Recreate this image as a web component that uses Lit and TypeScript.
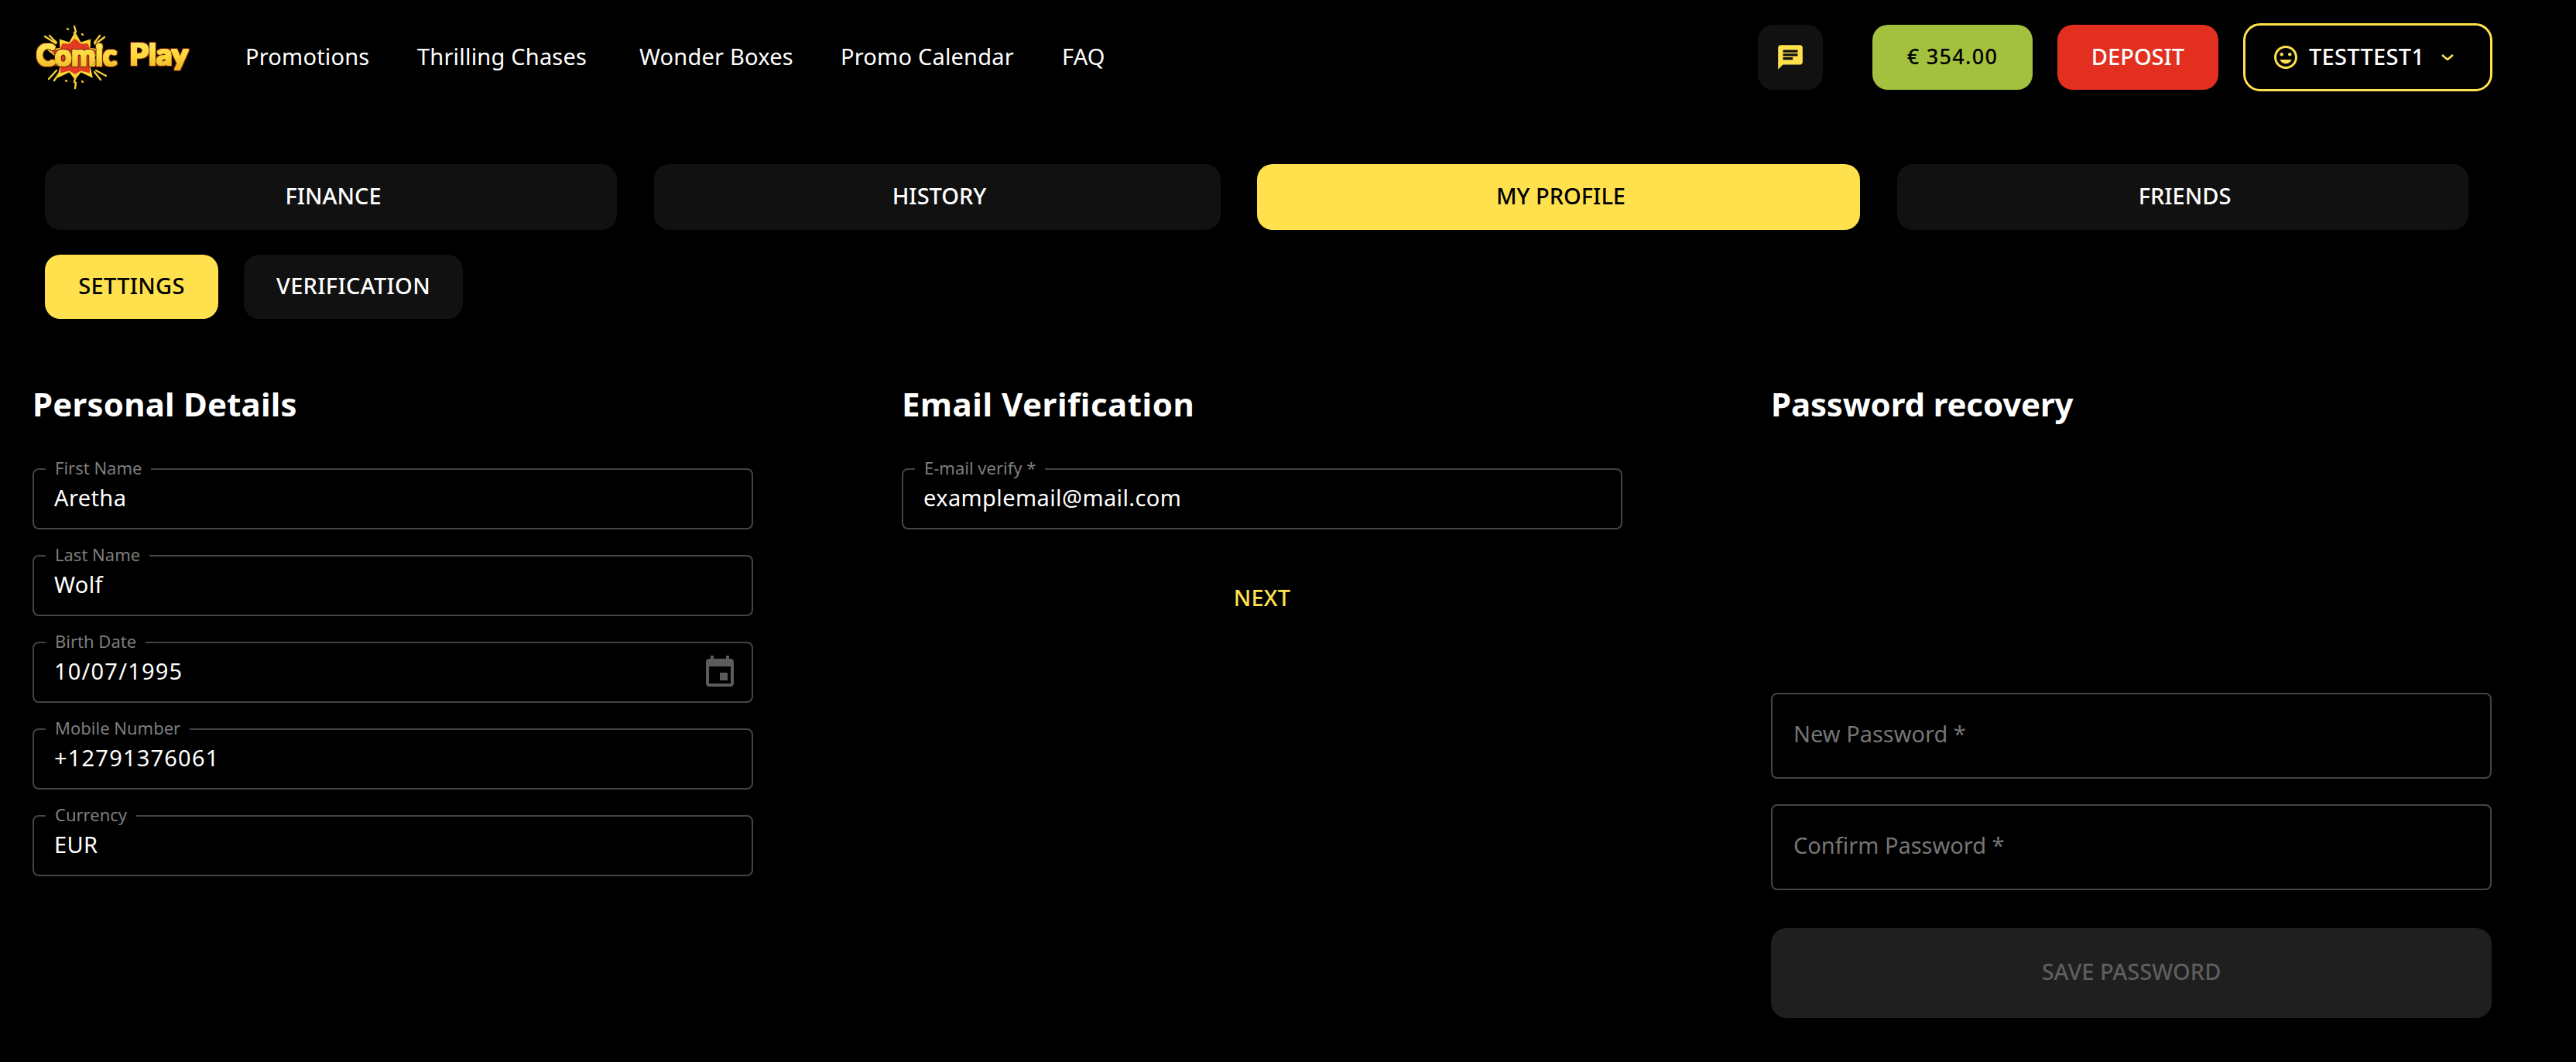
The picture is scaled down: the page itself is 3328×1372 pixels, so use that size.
import { LitElement, html, css, svg } from "lit";
import { customElement } from "lit/decorators.js";

const star = (cx: number, cy: number, rx: number, ry: number, inner: number, n: number) =>
  Array.from({ length: n * 2 }, (_, i) => {
    const a = (Math.PI * i) / n - Math.PI / 2;
    const k = i % 2 === 0 ? (i % 4 === 0 ? 1 : 0.88) : inner;
    return `${(cx + Math.cos(a) * rx * k).toFixed(1)},${(cy + Math.sin(a) * ry * k).toFixed(1)}`;
  }).join(" ");

const logo = svg`
  <defs>
    <linearGradient id="lg" x1="0" y1="0" x2="0" y2="1">
      <stop offset="0" stop-color="#ffe765"/><stop offset="0.55" stop-color="#fdd63a"/><stop offset="1" stop-color="#eaa91f"/>
    </linearGradient>
    <filter id="fat" x="-10%" y="-20%" width="120%" height="140%">
      <feMorphology in="SourceGraphic" operator="dilate" radius="0.8" result="f"/>
      <feMorphology in="SourceAlpha" operator="dilate" radius="2.4" result="o"/>
      <feFlood flood-color="#6e1f0e"/>
      <feComposite in2="o" operator="in" result="d"/>
      <feMerge><feMergeNode in="d"/><feMergeNode in="f"/></feMerge>
    </filter>
  </defs>
  <polygon points=${star(97, 67, 39, 33, 0.62, 10)} fill="#fdd835"/>
  <polygon points=${star(97, 67, 32, 25, 0.74, 10)} fill="#e23b22"/>
  <g stroke="#f3cf3a" stroke-width="2.4" fill="none" stroke-linecap="round">
    <path d="M58 40l14 9M64 39l9 9M135 41l-12 9M129 39l-7 9M63 95l10-11M70 97l7-10M137 91l-13-7M130 96l-8-10"/>
    <path d="M96 27l2 7-2 1 2 8M97 107l1-7-2-1 2-9"/>
    <path d="M87 30l1 1M106 37l1 1M85 97l1 1M106 98l1 1"/>
  </g>
  <g filter="url(#fat)">
    <text x="47" y="78" textLength="104" lengthAdjust="spacingAndGlyphs" class="lt">Comic</text>
    <text x="167" y="77" textLength="76" lengthAdjust="spacingAndGlyphs" class="lt">Play</text>
  </g>`;

const I = {
  chat: svg`<path fill="#ffe14d" d="M20 2H4c-1.1 0-1.99.9-1.99 2L2 22l4-4h14c1.1 0 2-.9 2-2V4c0-1.1-.9-2-2-2zM6 9h12v2H6V9zm8 5H6v-2h8v2zm4-6H6V6h12v2z"/>`,
  mood: svg`<path fill="#ffe14d" d="M11.99 2C6.47 2 2 6.48 2 12s4.47 10 9.99 10C17.52 22 22 17.52 22 12S17.52 2 11.99 2zM12 20c-4.42 0-8-3.58-8-8s3.58-8 8-8 8 3.58 8 8-3.58 8-8 8zm3.5-9c.83 0 1.5-.67 1.5-1.5S16.33 8 15.5 8 14 8.67 14 9.5s.67 1.5 1.5 1.5zm-7 0c.83 0 1.5-.67 1.5-1.5S9.33 8 8.5 8 7 8.67 7 9.5 7.67 11 8.5 11zm3.5 6.5c2.33 0 4.31-1.46 5.11-3.5H6.89c.8 2.04 2.78 3.5 5.11 3.5z"/>`,
  event: svg`<path fill="#5c5c5c" d="M17 12h-5v5h5v-5zM16 1v2H8V1H6v2H5c-1.11 0-1.99.9-1.99 2L3 19c0 1.1.89 2 2 2h14c1.1 0 2-.9 2-2V5c0-1.1-.9-2-2-2h-1V1h-2zm3 18H5V8h14v11z"/>`,
};

const nav = ["Promotions", "Thrilling Chases", "Wonder Boxes", "Promo Calendar", "FAQ"];
const tabs = [["FINANCE", false], ["HISTORY", false], ["MY PROFILE", true], ["FRIENDS", false]] as const;
const personal = [
  ["First Name", "Aretha", false],
  ["Last Name", "Wolf", false],
  ["Birth Date", "10/07/1995", true],
  ["Mobile Number", "+12791376061", true],
  ["Currency", "EUR", false],
] as const;

@customElement("app-root")
export class AppRoot extends LitElement {
  static styles = css`
    :host { display: block; background: #000; color: #fff; min-height: 1372px; font-family: "Noto Sans", sans-serif; font-size: 29px; letter-spacing: 0.2px; }
    * { box-sizing: border-box; }
    .page { padding-top: 30px; }
    .header { display: flex; align-items: center; height: 88px; padding: 0 108px 0 42px; }
    .logo { width: 206px; height: 84px; display: block; }
    .lt { font-family: "Lato", sans-serif; font-weight: 900; font-size: 37px; fill: url(#lg); letter-spacing: 0; }
    nav { display: grid; grid-template-columns: 222px 287px 260px 286px auto; margin-left: 69px; padding-bottom: 4px; }
    .right { display: flex; align-items: center; margin-left: auto; }
    .btn { height: 84px; border-radius: 20px; display: flex; align-items: center; justify-content: center; }
    .chat { width: 84px; background: #111; margin-right: 64px; }
    .chat svg { width: 38px; height: 38px; }
    .bal { width: 207px; background: #a3c13e; color: #000; font-size: 27px; font-weight: 500; letter-spacing: 1.3px; margin-right: 32px; padding-bottom: 4px; }
    .dep { width: 208px; background: #e22f20; font-weight: 500; letter-spacing: 0; margin-right: 32px; padding-bottom: 4px; }
    .user { width: 322px; height: 88px; border: 3px solid #ffe14d; border-radius: 22px; background: #000; font-weight: 500; justify-content: flex-start; padding-left: 34px; }
    .user span { margin-bottom: 4px; margin-left: -2px; letter-spacing: 0.3px; }
    .user .mood { width: 36px; height: 36px; margin-right: 14px; }
    .user .chev { width: 16px; height: 8px; margin-left: 22px; }
    .tabs { display: grid; grid-template-columns: 739px 732px 779px 738px; column-gap: 47.5px; margin: 94px 0 0 58px; width: fit-content; }
    .tab { height: 85px; border-radius: 20px; background: #111; display: flex; align-items: center; justify-content: center; font-weight: 500; letter-spacing: 0; padding: 0 0 4px 6px; }
    .on { background: #ffe14d; color: #000; }
    .sub { display: grid; grid-template-columns: 224px 283px; gap: 33px; margin: 32px 0 0 58px; }
    .sub .tab { height: 83px; padding: 0 0 4px; letter-spacing: 0.3px; }
    .cols { display: grid; grid-template-columns: repeat(3, 931px); column-gap: 192px; margin: 81px 0 0 42px; }
    h2 { margin: 0 0 50px; font-size: 42px; line-height: 58px; padding-bottom: 4px; font-weight: 700; letter-spacing: 0.2px; }
    h2.wide { letter-spacing: 0.55px; }
    h2.tight { letter-spacing: -0.15px; }
    .stack { display: flex; flex-direction: column; gap: 33px; }
    .field { position: relative; height: 79px; border: 2px solid #444; border-radius: 8px; display: flex; align-items: center; justify-content: space-between; padding: 0 17px 4px 26px; letter-spacing: 0.4px; }
    .num { letter-spacing: 1.2px; }
    .field label { position: absolute; left: 15px; top: -18px; padding: 0 12px; background: #000; color: #7d7d7d; font-size: 22px; line-height: 30px; letter-spacing: 0; }
    .field svg { width: 48px; height: 48px; flex: none; margin-top: 4px; }
    .next { color: #ffe14d; font-weight: 500; text-align: center; height: 40px; line-height: 40px; margin-top: 68px; }
    .third { margin-top: 340px; }
    .pw { height: 111px; padding-left: 27px; color: #757575; letter-spacing: 0; padding-bottom: 6px; }
    .save { height: 116px; margin-top: 49px; border-radius: 20px; background: #1f1f1f; color: #5e5e5e; display: flex; align-items: center; justify-content: center; font-weight: 500; letter-spacing: 0; padding-bottom: 5px; }
  `;

  render() {
    return html`<div class="page">
      <header class="header">
        <svg class="logo" viewBox="42 25 206 84">${logo}</svg>
        <nav>${nav.map((n) => html`<span>${n}</span>`)}</nav>
        <div class="right">
          <div class="btn chat"><svg viewBox="0 0 24 24">${I.chat}</svg></div>
          <div class="btn bal">€ 354.00</div>
          <div class="btn dep">DEPOSIT</div>
          <div class="btn user">
            <svg class="mood" viewBox="0 0 24 24">${I.mood}</svg>
            <span>TESTTEST1</span>
            <svg class="chev" viewBox="0 0 16 8"><path d="M1 1l7 6 7-6" fill="none" stroke="#ffe14d" stroke-width="2.6"/></svg>
          </div>
        </div>
      </header>
      <div class="tabs">${tabs.map(([t, on]) => html`<div class="tab ${on ? "on" : ""}">${t}</div>`)}</div>
      <div class="sub">
        <div class="tab on">SETTINGS</div>
        <div class="tab">VERIFICATION</div>
      </div>
      <div class="cols">
        <section>
          <h2>Personal Details</h2>
          <div class="stack">
            ${personal.map(([l, v, num]) => html`<div class="field"><label>${l}</label><span class=${num ? "num" : ""}>${v}</span>${l === "Birth Date" ? html`<svg viewBox="0 0 24 24">${I.event}</svg>` : ""}</div>`)}
          </div>
        </section>
        <section>
          <h2 class="wide">Email Verification</h2>
          <div class="field"><label>E-mail verify *</label><span>examplemail@mail.com</span></div>
          <div class="next">NEXT</div>
        </section>
        <section>
          <h2 class="tight">Password recovery</h2>
          <div class="stack third">
            <div class="field pw"><span>New Password *</span></div>
            <div class="field pw"><span>Confirm Password *</span></div>
          </div>
          <div class="save">SAVE PASSWORD</div>
        </section>
      </div>
    </div>`;
  }
}
